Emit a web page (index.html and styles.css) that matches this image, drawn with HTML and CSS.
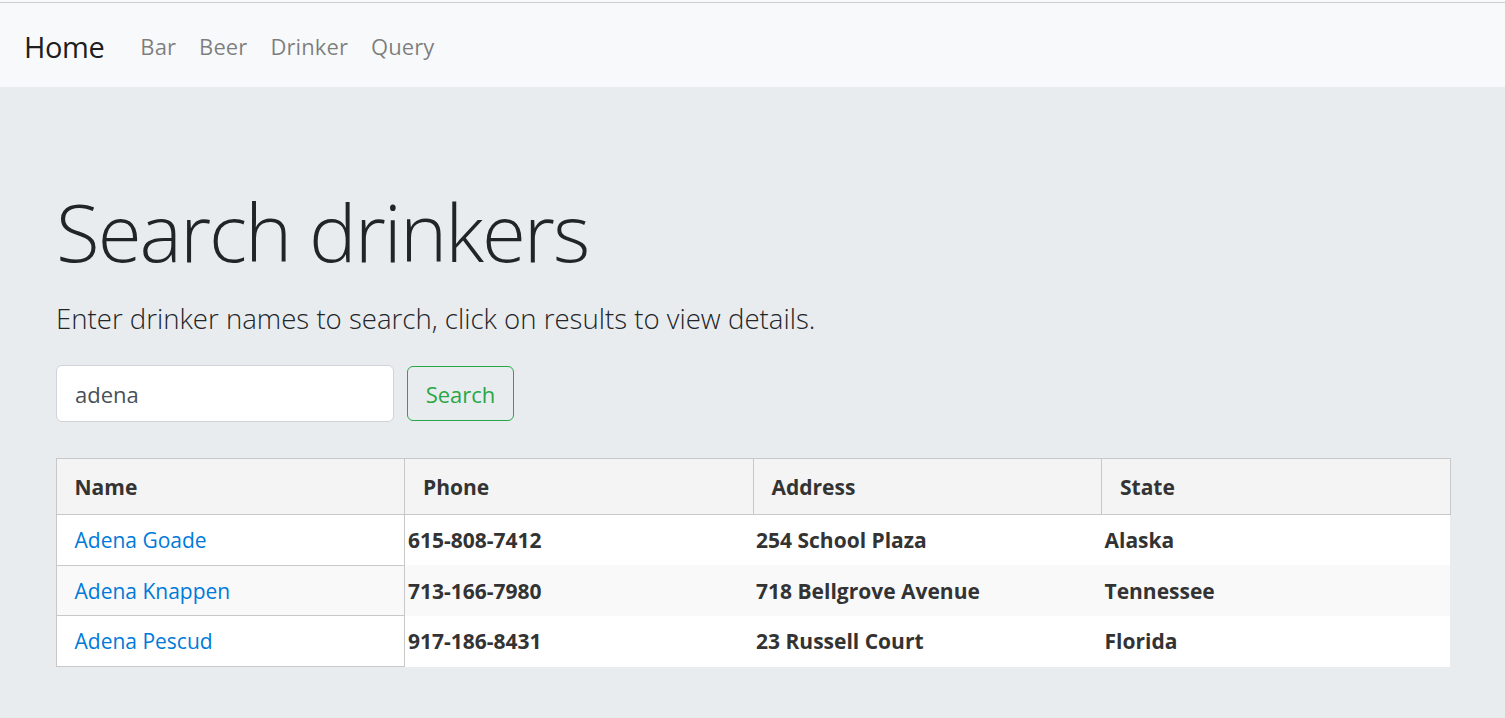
FILE: index.html
```html
<!DOCTYPE html>
<html lang="en">
<head>
<meta charset="utf-8">
<title>Search drinkers</title>
<link rel="stylesheet" href="styles.css">
</head>
<body>
<div class="topline"></div>
<nav class="navbar">
  <a class="brand" href="#">Home</a>
  <ul class="nav">
    <li><a class="nav-link" href="#">Bar</a></li>
    <li><a class="nav-link" href="#">Beer</a></li>
    <li><a class="nav-link" href="#">Drinker</a></li>
    <li><a class="nav-link" href="#">Query</a></li>
  </ul>
</nav>
<main class="jumbotron">
  <div class="container">
    <h1 class="display">Search drinkers</h1>
    <p class="lead">Enter drinker names to search, click on results to view details.</p>
    <form class="search-form">
      <input class="form-control" type="text" value="adena">
      <button class="btn-outline" type="button">Search</button>
    </form>
    <table class="results">
      <thead>
        <tr><th>Name</th><th>Phone</th><th>Address</th><th>State</th></tr>
      </thead>
      <tbody>
        <tr><td class="name"><a href="#">Adena Goade</a></td><td>615-808-7412</td><td>254 School Plaza</td><td>Alaska</td></tr>
        <tr class="odd"><td class="name"><a href="#">Adena Knappen</a></td><td>713-166-7980</td><td>718 Bellgrove Avenue</td><td>Tennessee</td></tr>
        <tr><td class="name"><a href="#">Adena Pescud</a></td><td>917-186-8431</td><td>23 Russell Court</td><td>Florida</td></tr>
      </tbody>
    </table>
  </div>
</main>
</body>
</html>
```
FILE: styles.css
```css
* { box-sizing: border-box; }
html, body { margin: 0; padding: 0; }
body {
  font-family: "Open Sans", "Noto Sans", sans-serif;
  color: #212529;
  background: #e9ecef;
  height: 718px;
  overflow: hidden;
}
.topline {
  height: 3px;
  background: #f8f9fa;
  border-bottom: 1px solid #cfcfd2;
}
.navbar {
  display: flex;
  align-items: center;
  height: 84px;
  padding: 2px 24px 0;
  background: #f8f9fa;
}
.brand {
  font-size: 29px;
  color: rgba(0,0,0,.9);
  text-decoration: none;
  margin-right: 24px;
  letter-spacing: -0.4px;
}
.nav {
  display: flex;
  list-style: none;
  margin: 0;
  padding: 0;
}
.nav-link {
  display: block;
  padding: 0 11.5px;
  font-size: 22px;
  letter-spacing: 0.1px;
  color: rgba(0,0,0,.5);
  text-decoration: none;
}
.nav li:first-child .nav-link { padding-left: 12px; }
.jumbotron {
  padding: 96px 0;
  background: #e9ecef;
}
.container {
  width: 1395px;
  margin: 0 auto;
  padding-left: 1px;
}
.display {
  margin: 0 0 17px;
  font-size: 80px;
  font-weight: 300;
  line-height: 1.2;
  letter-spacing: -2px;
  color: #212529;
}
.lead {
  margin: 0 0 24px;
  font-size: 27.6px;
  font-weight: 300;
  line-height: 45px;
  color: #212529;
}
.search-form {
  display: flex;
  align-items: center;
  gap: 13px;
  margin-bottom: 36px;
}
.form-control {
  width: 338px;
  height: 57px;
  padding: 9px 18px;
  font-family: inherit;
  font-size: 22px;
  color: #495057;
  background: #fff;
  border: 1px solid #ced4da;
  border-radius: 6px;
}
.btn-outline {
  width: 107px;
  height: 55px;
  padding: 0;
  font-family: inherit;
  font-size: 22px;
  color: #28a745;
  background: transparent;
  border: 1px solid #28a745;
  border-radius: 6px;
}
.results {
  width: 1395px;
  margin-left: -0.5px;
  table-layout: fixed;
  border-collapse: collapse;
  font-family: "Open Sans", sans-serif;
  font-size: 21px;
  color: #333;
}
.results th {
  height: 56px;
  padding: 0 18px;
  text-align: left;
  font-weight: 700;
  background: #f4f4f4;
  border: 1px solid #c8c8c8;
}
.results tbody tr { background: #fff; }
.results tbody tr.odd { background: #f9f9f9; }
.results td {
  height: 50.7px;
  padding: 0 2px 0 3px;
  font-weight: 700;
  vertical-align: middle;
}
.results td.name {
  padding: 0 18px;
  font-weight: 400;
  border: 1px solid #c8c8c8;
  border-top: 0;
}
.results td.name a {
  color: #007ad9;
  text-decoration: none;
}
```
